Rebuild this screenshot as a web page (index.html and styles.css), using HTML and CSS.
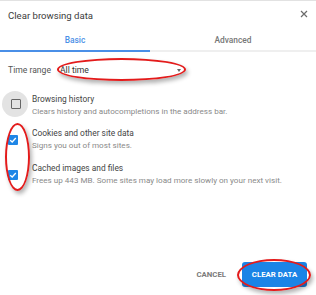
FILE: index.html
```html
<!DOCTYPE html>
<html lang="en">

<head>
  <meta charset="UTF-8">
  <meta name="viewport" content="width=device-width, initial-scale=1.0">
  <title>Clear browsing data</title>
  <link rel="stylesheet" href="styles.css">
</head>

<body>
  <div class="dialog">
    <!-- title bar -->
    <div class="title-bar">
      <span class="title">Clear browsing data</span>
      <svg class="close" width="8" height="8" viewBox="0 0 8 8">
        <path d="M1 1 L7 7 M7 1 L1 7" stroke="#6b6b6b" stroke-width="1.2" fill="none" />
      </svg>
    </div>

    <!-- tabs -->
    <div class="tabs">
      <div class="tab active">Basic</div>
      <div class="tab">Advanced</div>
    </div>

    <!-- time range -->
    <div class="range-row">
      <span class="range-label">Time range</span>
      <div class="select">
        <span>All time</span>
        <span class="arrow"></span>
      </div>
    </div>

    <!-- options -->
    <div class="options">
      <div class="option first">
        <div class="box-cell">
          <span class="ripple"></span>
          <span class="box"></span>
        </div>
        <div class="option-text">
          <div class="option-title">Browsing history</div>
          <div class="option-desc">Clears history and autocompletions in the address bar.</div>
        </div>
      </div>
      <div class="option">
        <div class="box-cell">
          <span class="box checked">
            <svg width="8" height="8" viewBox="0 0 8 8"><path d="M1.2 4.2 L3.2 6 L6.8 2" stroke="#fff" stroke-width="1.3" fill="none" /></svg>
          </span>
        </div>
        <div class="option-text">
          <div class="option-title">Cookies and other site data</div>
          <div class="option-desc">Signs you out of most sites.</div>
        </div>
      </div>
      <div class="option">
        <div class="box-cell">
          <span class="box checked">
            <svg width="8" height="8" viewBox="0 0 8 8"><path d="M1.2 4.2 L3.2 6 L6.8 2" stroke="#fff" stroke-width="1.3" fill="none" /></svg>
          </span>
        </div>
        <div class="option-text">
          <div class="option-title">Cached images and files</div>
          <div class="option-desc">Frees up 443 MB. Some sites may load more slowly on your next visit.</div>
        </div>
      </div>
    </div>

    <!-- buttons -->
    <div class="actions">
      <button class="btn-cancel">CANCEL</button>
      <button class="btn-clear">CLEAR DATA</button>
    </div>
  </div>

  <!-- red annotation marks -->
  <div class="mark mark-range"></div>
  <div class="mark mark-boxes"></div>
  <div class="mark mark-button"></div>
</body>

</html>
```

FILE: styles.css
```css
/* page */
body {
  margin: 0;
  background: #fff;
  font-family: Roboto, "Liberation Sans", sans-serif;
  color: #333;
  overflow: hidden;
}

.dialog {
  position: relative;
  width: 316px;
  height: 295px;
  border-top: 1px solid #e2e2e2;
  box-sizing: border-box;
}

/* title bar */
.title-bar {
  height: 28px;
  display: flex;
  align-items: center;
  justify-content: space-between;
  padding: 0 8px 0 8px;
}

.title {
  font-size: 9.6px;
  color: #3c3c3c;
}

.close {
  margin-top: -2px;
}

/* tabs */
.tabs {
  display: flex;
  height: 23px;
}

.tab {
  display: flex;
  align-items: center;
  justify-content: center;
  font-size: 8.4px;
  font-weight: 500;
  color: #777;
  border-bottom: 2px solid #efefef;
}

.tab:first-child {
  width: 150px;
}

.tab:last-child {
  flex: 1;
}

.tab.active {
  color: #4a8fe7;
  border-bottom-color: #4a8fe7;
}

/* time range */
.range-row {
  height: 36px;
  display: flex;
  align-items: center;
  padding-left: 8px;
  font-size: 8.6px;
}

.range-label {
  color: #555;
  width: 52px;
}

.select {
  width: 121px;
  display: flex;
  justify-content: space-between;
  align-items: center;
  color: #333;
}

.arrow {
  width: 0;
  height: 0;
  border-left: 2.5px solid transparent;
  border-right: 2.5px solid transparent;
  border-top: 3px solid #666;
}

/* options */
.option {
  display: flex;
  align-items: center;
  height: 35px;
}

.option.first {
  height: 34px;
}

.box-cell {
  position: relative;
  width: 32px;
  height: 26px;
  display: flex;
  align-items: center;
  justify-content: center;
  margin-left: -3px;
}

.ripple {
  position: absolute;
  left: 5px;
  top: 0;
  width: 26px;
  height: 26px;
  border-radius: 50%;
  background: #e3e3e3;
}

.option.first .box-cell {
  margin-top: -3px;
}

.box {
  position: relative;
  width: 8px;
  height: 8px;
  border: 1.5px solid #666;
  border-radius: 1px;
  margin-left: 5px;
  display: flex;
  align-items: center;
  justify-content: center;
}

.box.checked {
  width: 10px;
  height: 10px;
  border: none;
  background: #1f86e6;
  margin-left: 0;
}

.option-text {
  display: flex;
  flex-direction: column;
  margin-left: 3px;
}

.option-title {
  font-size: 8.4px;
  line-height: 11px;
  color: #444;
}

.option-desc {
  font-size: 8.1px;
  line-height: 12px;
  color: #8a8a8a;
}

/* buttons */
.actions {
  display: flex;
  justify-content: flex-end;
  align-items: center;
  gap: 12px;
  padding: 70px 9px 0 0;
}

.actions button {
  font-family: Roboto, "Liberation Sans", sans-serif;
  font-size: 7.8px;
  font-weight: 700;
  border: none;
  background: transparent;
  cursor: pointer;
}

.btn-cancel {
  color: #7a7a7a;
  padding: 0 4px;
}

.btn-clear {
  width: 65px;
  height: 25px;
  color: #fff;
  background: #1b84e6 !important;
  border-radius: 3px;
}

/* red annotation ellipses */
.mark {
  position: absolute;
  border: 2px solid #e31b1b;
  border-radius: 50%;
  box-shadow: 2px 3px 4px rgba(0, 0, 0, 0.3);
  box-sizing: border-box;
}

.mark-range {
  left: 57px;
  top: 58px;
  width: 129px;
  height: 23px;
}

.mark-boxes {
  left: 5px;
  top: 123px;
  width: 25px;
  height: 68px;
}

.mark-button {
  left: 237px;
  top: 259px;
  width: 74px;
  height: 32px;
}
```
